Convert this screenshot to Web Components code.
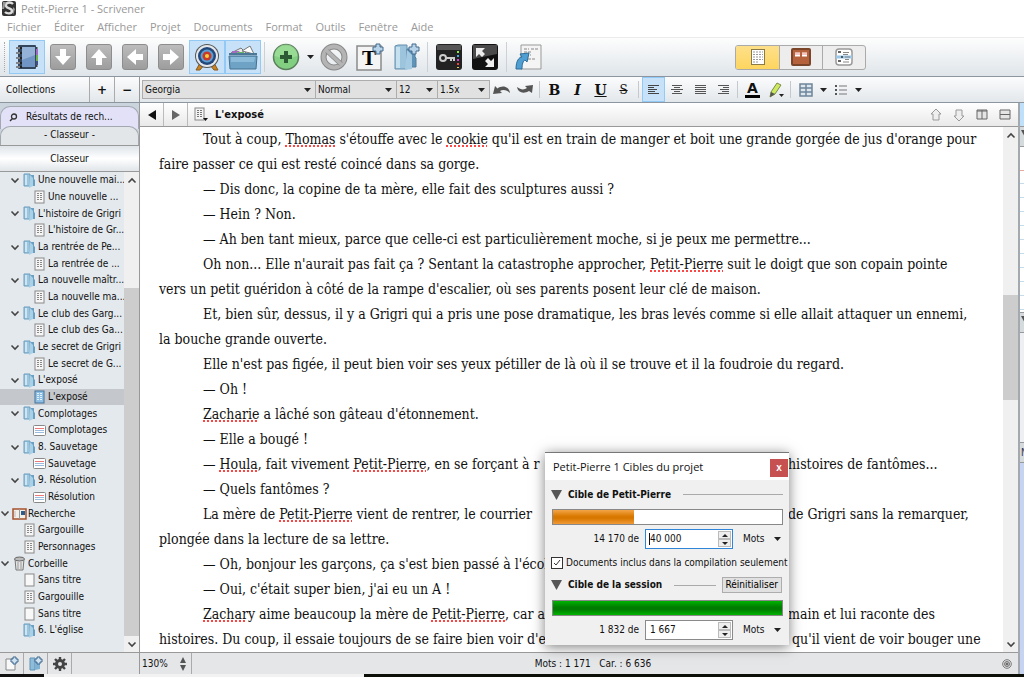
<!DOCTYPE html>
<html lang="fr">
<head>
<meta charset="utf-8">
<title>Petit-Pierre 1 - Scrivener</title>
<style>
  html, body { margin: 0; height: 100%; overflow: hidden; }
  body { font: 10px/16px "DejaVu Sans Condensed", "Liberation Sans", sans-serif; color: #111; background: #fff; }
</style>
</head>
<body>
<scrivener-app></scrivener-app>

<script>
// viewBox + markup for every icon
const ICONS = {
  app: ['0 0 16 16', '<rect x="1" width="14" height="15" rx="2" fill="#333"/><path d="M12 3C9 0 4 2 5 5s6 2 6 5-5 3-7 1" fill="none" stroke="#ddd" stroke-width="2.4"/><path d="M2 1h3L3 8H1zM12 6l2 2-2 6z" fill="#999"/>'],
  notebook: ['0 0 28 28', '<path d="M22 4h2.500v20H22z" fill="#444"/><path d="M22 6h3v6h-3z" fill="#a06bbd"/><path d="M22 12h3v6h-3z" fill="#6bb04a"/><path d="M22 18h3v4h-3z" fill="#444e80"/><rect x="5" y="2" width="18" height="24" rx="1" fill="#34465c"/><path d="M9 4h13v20H9z" fill="#7094c4"/><path d="M9 4h13v8L9 17z" fill="#94b1d8"/><path d="M3 5h6M3 10h6M3 15h6M3 20h6M3 24h6" stroke="#222" stroke-width="2.200"/><path d="M3 5h4M3 10h4M3 15h4M3 20h4M3 24h4" stroke="#dde5ee"/>'],
  target: ['0 0 28 28', '<path d="M7 20l-4 7h4l4-5zM21 20l4 7h-4l-4-5z" fill="#c98222" stroke="#8a5b1c"/><circle cx="14" cy="13" r="12" fill="#555"/><circle cx="14" cy="13" r="11" fill="#e6e9ec"/><circle cx="14" cy="13" r="9" fill="#24487a"/><circle cx="14" cy="13" r="6.500" fill="#5aa0d8"/><circle cx="14" cy="13" r="4.500" fill="#c63a2c"/><circle cx="14" cy="13" r="2" fill="#f2d13c"/>'],
  research: ['0 0 30 28', '<path d="M3 10l10-5 6 6z" fill="#e9e9e9" stroke="#777"/><path d="M14 8l8-5 4 8z" fill="#fff" stroke="#777"/><path d="M4 8h7l2 3H4z" fill="#a46bc0"/><path d="M9 9h7l1 3H9z" fill="#69b768"/><path d="M1 10h28v2H1z" fill="#4b7897"/><path d="M1 13h28l-1 13H2z" fill="#6fa3c6" stroke="#44708f"/><path d="M3 14h24l-1 5H3z" fill="#8cbbd9"/>'],
  plus: ['0 0 28 28', '<circle cx="14" cy="14" r="12.500" fill="#82cf82" stroke="#5a7f5c" stroke-width="1.500"/><path d="M2.500 13a11.500 11.500 0 0 1 23 0q-11 4-23 0" fill="#a6e2a0" opacity=".6"/><path d="M12 8h4v4h4v4h-4v4h-4v-4H8v-4h4z" fill="#2c5a34"/>'],
  forbid: ['0 0 28 28', '<circle cx="14" cy="14" r="10.500" fill="none" stroke="#888" stroke-width="6"/><circle cx="14" cy="14" r="10.500" fill="none" stroke="#b4b4b4" stroke-width="4"/><path d="M7 8l14 13" stroke="#888" stroke-width="5"/><path d="M6 7l16 15" stroke="#b4b4b4" stroke-width="3.500"/>'],
  newtext: ['0 0 28 28', '<path d="M1 3h24v24H1z" fill="#f4f4f4" stroke="#8b8b8b" stroke-width="1.500"/><text x="13" y="22" text-anchor="middle" font-family="Liberation Serif" font-weight="bold" font-size="21">T</text><path d="M20 1h4v3h3v4h-3v3h-4V8h-3V4h3z" fill="#b6d3ea" stroke="#456a8c"/>'],
  newfolder: ['0 0 28 28', '<path d="M3 3l3-1h9v24H3z" fill="#9cc4dd" stroke="#648fac"/><path d="M4 4h4v21H4z" fill="#c5e0ef"/><path d="M15 6h8v8l1 1v9h-9z" fill="#5f93b8" stroke="#527d9c"/><path d="M15 7l5 5v14l-7 1z" fill="#a5cbe2"/><path d="M20 1h4v3h3v4h-3v3h-4V8h-3V4h3z" fill="#b6d3ea" stroke="#456a8c"/>'],
  keywords: ['0 0 28 28', '<rect x="1" y="1" width="26" height="26" rx="3" fill="#222"/><path d="M2 2h24v5H2z" fill="#555"/><circle cx="8" cy="15" r="3" fill="none" stroke="#ccc" stroke-width="2"/><path d="M11 15h9M16 15v3M19 15v3" stroke="#ccc" stroke-width="2"/><path d="M22 8h2v2h-2z" fill="#8e4"/><path d="M22 12h2v2h-2z" fill="#4ad"/><path d="M22 16h2v2h-2z" fill="#c4c"/><path d="M22 20h2v2h-2z" fill="#e44"/><path d="M22 24h2v1h-2z" fill="#ec4"/>'],
  compose: ['0 0 28 28', '<rect x="1" y="1" width="26" height="26" rx="3" fill="#111"/><path d="M2 2h24v9L2 16z" fill="#4a4a4a"/><path d="M5 5h9l-3 3 3 3-3 3-3-3-3 3z" fill="#eee"/><path d="M23 24h-9l3-3-3-3 3-3 3 3 3-3z" fill="#eee"/>'],
  compile: ['0 0 28 28', '<path d="M7 2h20v24H7z" fill="#f4f4f4" stroke="#999"/><path d="M10 6h5M17 6h7M10 9h8M12 12h5M14 16h7" stroke="#888" stroke-dasharray="3 1"/><path d="M2 26c0-8 3-12 6-12l-2-3 9-1-2 9-2-2c-2 1-3 4-3 9z" fill="#4f9fd2" stroke="#2d6b98"/>'],
  down: ['0 0 24 24', '<path d="M9 4h6v7h5l-8 9-8-9h5z" fill="#fff"/>'],
  up: ['0 0 24 24', '<path d="M9 20h6v-7h5l-8-9-8 9h5z" fill="#fff"/>'],
  left: ['0 0 24 24', '<path d="M20 9v6h-7v5l-9-8 9-8v5z" fill="#fff"/>'],
  right: ['0 0 24 24', '<path d="M4 9v6h7v5l9-8-9-8v5z" fill="#fff"/>'],
  page: ['0 0 16 18', '<rect x="1.500" y="1.500" width="13" height="15" fill="#fff" stroke="#8a7a4a"/><path d="M3 4h10M3 6.500h10M3 9h10M3 11.500h10M3 14h6" stroke="#999" stroke-dasharray="2 1"/>'],
  cork: ['0 0 20 18', '<rect x="1" y="1" width="18" height="16" rx="1" fill="#b5613b" stroke="#7a4529" stroke-width="2"/><path d="M4 4.500h5v4H4zM11 4.500h5v4h-5z" fill="#fff"/><path d="M4 6h5M11 6h5" stroke="#e88"/>'],
  outline: ['0 0 18 18', '<rect x="1" y="1" width="16" height="16" rx="3" fill="#fff" stroke="#999" stroke-width="1.500"/><path d="M1 9h16" stroke="#9cc8e8" stroke-width="3"/><path d="M3 4h3M6 9h2M3 13h3" stroke="#333" stroke-width="1.500"/><path d="M8 4.500h6M8 6.500h5M10 9h5M10 11.500h4M8 14h6" stroke="#888"/>'],
  undo: ['0 0 18 12', '<path d="M0 10l2-8 2.500 2.500C9 1 16 2 17 9c-3-3-7-4-10-2l2 2z" fill="#555"/>'],
  redo: ['0 0 18 12', '<path d="M17 1l-1 8-3-2C8 10 2 9 1 3c4 3 7 3 10 1L9 2z" fill="#555"/>'],
  alignleft: ['0 0 12 11', '<path d="M0 1.500h11M0 3.500h6M0 5.500h9M0 7.500h7M0 9.500h11" stroke="#444"/>'],
  aligncenter: ['0 0 12 11', '<path d="M1 1.500h10M3 3.500h6M0 5.500h12M3 7.500h6M1 9.500h10" stroke="#555"/>'],
  alignjustify: ['0 0 12 11', '<path d="M1 1.500h11M1 3.500h11M1 5.500h11M1 7.500h11M1 9.500h11" stroke="#555"/>'],
  alignright: ['0 0 12 11', '<path d="M1 1.500h11M6 3.500h6M3 5.500h9M5 7.500h7M1 9.500h11" stroke="#555"/>'],
  pen: ['0 0 16 18', '<path d="M2 16l1-5L9 2l4 2-6 9z" fill="#cdea5f" stroke="#7b8a4a"/><path d="M2 16l1-5 4 2z" fill="#555"/><path d="M11 13h5l-2.500 3z" fill="#222"/>'],
  table: ['0 0 14 14', '<path d="M1 1h12v12H1zM1 5h12M1 9h12M7 1v12" fill="#dbe6ef" stroke="#6f8599" stroke-width="1.500"/>'],
  list: ['0 0 12 12', '<path d="M0 2h2M0 6h2M0 10h2" stroke="#555" stroke-width="2"/><path d="M4 2h8M4 6h8M4 10h8" stroke="#777"/>'],
  arrow: ['0 0 7 4', '<path d="M0 0h7L3.500 4z" fill="#222"/>'],
  navback: ['0 0 8 10', '<path d="M8 0v10L0 5z" fill="#111"/>'],
  navnext: ['0 0 8 10', '<path d="M0 0v10l8-5z" fill="#666"/>'],
  docmenu: ['0 0 14 15', '<rect x="1" y="1" width="9" height="12" fill="#f4f4f4" stroke="#888"/><path d="M3 3.500h5M3 5.500h5M3 7.500h5M3 9.500h5" stroke="#777" stroke-dasharray="2 1"/><path d="M9 11h5l-2.500 3z" fill="#111"/>'],
  prev: ['0 0 12 14', '<path d="M6 1l5 5H9v6H3V6H1z" fill="#eee" stroke="#999"/>'],
  next: ['0 0 12 14', '<path d="M6 13l5-5H9V2H3v6H1z" fill="#eee" stroke="#999"/>'],
  splitv: ['0 0 12 11', '<path d="M1 1h10v9H1zM6 1v9" fill="#e4e4e4" stroke="#666"/><path d="M1 2h10" stroke="#666"/>'],
  splith: ['0 0 12 11', '<path d="M1 1h10v9H1zM1 5.500h10" fill="#e4e4e4" stroke="#666"/>'],
  search: ['0 0 9 9', '<circle cx="5" cy="3.500" r="2.500" fill="none" stroke="#333" stroke-width="1.300"/><path d="M3.500 5.500L1 8" stroke="#333" stroke-width="1.500"/>'],
  chevron: ['0 0 10 7', '<path d="M1.500 1.500L5 5l3.500-3.500" fill="none" stroke="#444" stroke-width="1.600"/>'],
  chevronup: ['0 0 10 7', '<path d="M1.500 5.500L5 2l3.500 3.500" fill="none" stroke="#444" stroke-width="1.600"/>'],
  folder: ['0 0 13 15', '<path d="M1 1h6v12H1z" fill="#9cc6de" stroke="#6c9dbd"/><path d="M2 2h2v10H2z" fill="#cfe5f1"/><path d="M7 2h4v4l1 1v6H7z" fill="#6aa0c4"/><path d="M7 2l3 3v8l-4 2z" fill="#a9d0e6"/>'],
  doc: ['0 0 11 14', '<rect x="1" y="1" width="9" height="12" fill="#f6f6f6" stroke="#888"/><path d="M3 3.500h5M3 5.500h5M3 7.500h5M3 9.500h5" stroke="#888" stroke-dasharray="2 1"/>'],
  docblue: ['0 0 11 14', '<rect x="1" y="1" width="9" height="12" fill="#8fc0e4" stroke="#44729a"/><path d="M3 3.500h5M3 5.500h5M3 7.500h5M3 9.500h5" stroke="#e5f2fb" stroke-dasharray="2 1"/>'],
  blank: ['0 0 11 14', '<rect x="1" y="1" width="9" height="12" fill="#f8f8f8" stroke="#888"/>'],
  card: ['0 0 13 11', '<rect x=".5" y=".5" width="12" height="10" rx="1" fill="#fff" stroke="#888"/><path d="M2 3.500h9" stroke="#e77"/><path d="M2 5.500h9M2 7.500h9" stroke="#9bd"/>'],
  binder: ['0 0 15 12', '<rect x="1" y="1" width="13" height="10" fill="#f1efe8" stroke="#a5502c" stroke-width="1.500"/><path d="M7.500 1v10" stroke="#999"/><path d="M9 3h4v4H9z" fill="#2d5d8c"/><path d="M3 3v6" stroke="#bbb"/>'],
  trash: ['0 0 13 15', '<path d="M2 3h9l-1 11H3z" fill="#e4e4e4" stroke="#777"/><ellipse cx="6.500" cy="3" rx="5" ry="2" fill="#bbb" stroke="#666"/><path d="M5 6v7M8 6v7" stroke="#999"/>'],
  newdoc: ['0 0 14 15', '<path d="M1 3h9v11H1z" fill="#f8f8f8" stroke="#888"/><path d="M8 1h3v2h2v3h-2v2H8V6H6V3h2z" fill="#cfe2f1" stroke="#3d668c"/>'],
  addfolder: ['0 0 14 15', '<path d="M1 2h5v12H1z" fill="#8fbcd8" stroke="#5f93b5"/><path d="M6 3h5v10l-5 1z" fill="#7fb2d3"/><path d="M8 1h3v2h2v3h-2v2H8V6H6V3h2z" fill="#cfe2f1" stroke="#3d668c"/>'],
  gear: ['0 0 14 14', '<circle cx="7" cy="7" r="3.500" fill="none" stroke="#444" stroke-width="3"/><path d="M7 0v3M7 11v3M0 7h3M11 7h3M2 2l2 2M10 10l2 2M12 2l-2 2M4 10l-2 2" stroke="#444" stroke-width="2.400"/>'],
  stepper: ['0 0 8 16', '<path d="M1 7l3-6 3 6zM1 9h6l-3 6z" fill="#555"/>'],
  rings: ['0 0 10 10', '<circle cx="5" cy="5" r="4.300" fill="none" stroke="#777"/><circle cx="5" cy="5" r="2.500" fill="#bbb" stroke="#777"/><circle cx="5" cy="5" r="1" fill="#555"/>'],
  triangle: ['0 0 11 10', '<path d="M0 0h11L5.500 10z" fill="#555"/>']
};

class SvgIcon extends HTMLElement {
  connectedCallback() {
    const [box, shape] = ICONS[this.getAttribute('name')];
    const [, , w, h] = box.split(' ');
    this.attachShadow({ mode: 'open' });
    this.shadowRoot.innerHTML = `
      <style>
        :host { display: inline-flex; flex: none; }
        svg { display: block; }
      </style>
      <svg width="${w}" height="${h}" viewBox="${box}" aria-hidden="true">${shape}</svg>
    `;
  }
}
customElements.define('svg-icon', SvgIcon);

class ToolButton extends HTMLElement {
  connectedCallback() {
    this.attachShadow({ mode: 'open' });
    this.shadowRoot.innerHTML = `
      <style>
        :host { display: flex; flex: none; width: var(--tool-width, 23px); align-self: stretch; }
        button {
          flex: 1; display: flex; align-items: center; justify-content: center; box-sizing: border-box;
          margin: 0; padding: 0; border: 1px solid transparent; background: none; color: #111; font: inherit;
        }
        span { display: flex; }
        :host([active]) button { background: #c6e1f8; border-color: #92c9f5; }
        :host([tile]) span {
          border: 1px solid #8d8d8d; border-radius: 3px;
          background: linear-gradient(#bcbcbc, #9d9d9d);
        }
      </style>
      <button type="button" aria-label="${this.getAttribute('label') || ''}"><span><slot></slot></span></button>
    `;
  }
}
customElements.define('tool-button', ToolButton);

class ComboBox extends HTMLElement {
  connectedCallback() {
    this.attachShadow({ mode: 'open' });
    this.shadowRoot.innerHTML = `
      <style>
        :host { display: grid; align-items: center; box-sizing: border-box; height: 19px; border: 1px solid #adadad; background: #e1e1e1; }
        :host([plain]) { border: 0; background: none; }
        select, svg-icon { grid-area: 1 / 1; }
        select { appearance: none; min-width: 0; width: 100%; height: 17px; margin: 0; padding: 0 2px; border: 0; background: none; font: inherit; color: inherit; }
        svg-icon { justify-self: end; margin-right: 4px; pointer-events: none; }
        :host([plain]) svg-icon { margin-right: 2px; }
      </style>
      <select aria-label="${this.getAttribute('label')}"><option>${this.getAttribute('value')}</option></select>
      <svg-icon name="arrow"></svg-icon>
    `;
  }
}
customElements.define('combo-box', ComboBox);

class ScrollTrack extends HTMLElement {
  connectedCallback() {
    const [before, thumb, after] = this.getAttribute('ratio').split(' ');
    this.attachShadow({ mode: 'open' });
    this.shadowRoot.innerHTML = `
      <style>
        :host { display: flex; flex-direction: column; flex: none; width: 15px; background: #f0f0f0; }
        button { flex: none; height: 16px; display: flex; align-items: center; justify-content: center; margin: 0; padding: 0; border: 0; background: none; }
        .thumb { flex: ${thumb} 0 0; background: #cdcdcd; }
      </style>
      <button type="button" aria-label="Haut"><svg-icon name="chevronup"></svg-icon></button>
      <div style="flex: ${before} 0 0"></div>
      <div class="thumb"></div>
      <div style="flex: ${after} 0 0"></div>
      <button type="button" aria-label="Bas"><svg-icon name="chevron"></svg-icon></button>
    `;
  }
}
customElements.define('scroll-track', ScrollTrack);

class WindowHeader extends HTMLElement {
  connectedCallback() {
    const menus = ['Fichier', 'Éditer', 'Afficher', 'Projet', 'Documents', 'Format', 'Outils', 'Fenêtre', 'Aide'];
    this.attachShadow({ mode: 'open' });
    this.shadowRoot.innerHTML = `
      <style>
        :host { display: block; flex: none; font: 11px/16px "Open Sans", "Noto Sans", sans-serif; color: #999; }
        .title { display: flex; align-items: center; gap: 4px; height: 17px; padding-left: 1px; }
        nav { display: flex; gap: 13px; height: 20px; align-items: center; padding-left: 7px; }
        a { color: inherit; text-decoration: none; }
      </style>
      <div class="title"><svg-icon name="app"></svg-icon><span>Petit-Pierre 1 - Scrivener</span></div>
      <nav>${menus.map(m => `<a href="#">${m}</a>`).join('')}</nav>
    `;
  }
}
customElements.define('window-header', WindowHeader);

class MainToolbar extends HTMLElement {
  connectedCallback() {
    this.attachShadow({ mode: 'open' });
    this.shadowRoot.innerHTML = `
      <style>
        :host {
          --tool-width: 36px;
          display: flex; flex: none; align-items: center; box-sizing: border-box; height: 40px; padding: 2px 0 2px 4px;
          border-top: 1px solid #ececec; border-bottom: 1px solid #8d969f; background: linear-gradient(#fdfdfd, #dfe5ea);
        }
        .grip { width: 1px; height: 30px; margin-right: 3px; border-left: 1px dotted #aaa; }
        .sep { flex: none; width: 1px; height: 30px; margin: 0 3px; background: #ccd1d6; }
        .drop { --tool-width: 12px; }
        .views { display: flex; margin: 0 158px 0 auto; border: 1px solid #aaa; border-radius: 3px; overflow: hidden; background: #ededed; }
        .views button { width: 43px; height: 23px; box-sizing: border-box; display: flex; align-items: center; justify-content: center; margin: 0; padding: 0; border: 0; border-left: 1px solid #aaa; background: none; }
        .views button:first-child { border-left: 0; background: linear-gradient(#fde08a, #fdd55f); }
      </style>
      <div class="grip"></div>
      <tool-button active label="Classeur"><svg-icon name="notebook"></svg-icon></tool-button>
      <tool-button tile label="Descendre"><svg-icon name="down"></svg-icon></tool-button>
      <tool-button tile label="Monter"><svg-icon name="up"></svg-icon></tool-button>
      <tool-button tile label="Gauche"><svg-icon name="left"></svg-icon></tool-button>
      <tool-button tile label="Droite"><svg-icon name="right"></svg-icon></tool-button>
      <tool-button active label="Cibles"><svg-icon name="target"></svg-icon></tool-button>
      <tool-button active label="Dossier"><svg-icon name="research"></svg-icon></tool-button>
      <div class="sep"></div>
      <tool-button label="Ajouter"><svg-icon name="plus"></svg-icon></tool-button>
      <tool-button class="drop" label="Type"><svg-icon name="arrow"></svg-icon></tool-button>
      <tool-button label="Supprimer"><svg-icon name="forbid"></svg-icon></tool-button>
      <tool-button label="Nouveau texte"><svg-icon name="newtext"></svg-icon></tool-button>
      <tool-button label="Nouveau dossier"><svg-icon name="newfolder"></svg-icon></tool-button>
      <div class="sep"></div>
      <tool-button label="Mots-clés"><svg-icon name="keywords"></svg-icon></tool-button>
      <tool-button label="Plein écran"><svg-icon name="compose"></svg-icon></tool-button>
      <div class="sep"></div>
      <tool-button label="Compiler"><svg-icon name="compile"></svg-icon></tool-button>
      <div class="views">
        <button type="button" aria-label="Texte"><svg-icon name="page"></svg-icon></button>
        <button type="button" aria-label="Tableau"><svg-icon name="cork"></svg-icon></button>
        <button type="button" aria-label="Plan"><svg-icon name="outline"></svg-icon></button>
      </div>
    `;
  }
}
customElements.define('main-toolbar', MainToolbar);

class FormatBar extends HTMLElement {
  connectedCallback() {
    this.attachShadow({ mode: 'open' });
    this.shadowRoot.innerHTML = `
      <style>
        :host {
          display: flex; flex: none; align-items: center; box-sizing: border-box; height: 26px;
          border-bottom: 1px solid #8d969f; background: linear-gradient(#fcfcfd, #e2e7eb);
        }
        .collections { display: flex; align-items: center; align-self: stretch; box-sizing: border-box; width: 140px; border-right: 1px solid #999; margin-right: 2px; }
        .collections span { flex: 1; padding-left: 6px; }
        .collections tool-button { box-sizing: border-box; width: 25px; border-left: 1px solid #aaa; font: bold 12px "DejaVu Sans", sans-serif; }
        .font { width: 174px; } .style { width: 81px; } .size { width: 41px; } .spacing { width: 52px; }
        combo-box + combo-box { border-left: 0; }
        .sep { flex: none; width: 1px; height: 17px; margin: 0 3px; background: #c4c9ce; }
        .drop { --tool-width: 12px; }
        .glyph { font: bold 14px/20px "DejaVu Serif", serif; }
        .i { font-style: italic; } .u { text-decoration: underline; } .s { font-size: 12px; font-weight: normal; text-decoration: line-through; }
        .color { display: block; padding: 0 2px; border-bottom: 3px solid #000; font: bold 14px/13px "DejaVu Sans", sans-serif; }
      </style>
      <div class="collections">
        <span>Collections</span>
        <tool-button>+</tool-button>
        <tool-button>−</tool-button>
      </div>
      <combo-box class="font" label="Police" value="Georgia"></combo-box>
      <combo-box class="style" label="Style" value="Normal"></combo-box>
      <combo-box class="size" label="Taille" value="12"></combo-box>
      <combo-box class="spacing" label="Interligne" value="1.5x"></combo-box>
      <tool-button label="Annuler"><svg-icon name="undo"></svg-icon></tool-button>
      <tool-button label="Rétablir"><svg-icon name="redo"></svg-icon></tool-button>
      <div class="sep"></div>
      <tool-button class="glyph">B</tool-button>
      <tool-button class="glyph i">I</tool-button>
      <tool-button class="glyph"><span class="u">U</span></tool-button>
      <tool-button class="glyph"><span class="s">S</span></tool-button>
      <div class="sep"></div>
      <tool-button active label="Gauche"><svg-icon name="alignleft"></svg-icon></tool-button>
      <tool-button label="Centrer"><svg-icon name="aligncenter"></svg-icon></tool-button>
      <tool-button label="Justifier"><svg-icon name="alignjustify"></svg-icon></tool-button>
      <tool-button label="Droite"><svg-icon name="alignright"></svg-icon></tool-button>
      <div class="sep"></div>
      <tool-button><span class="color">A</span></tool-button>
      <tool-button label="Surligner"><svg-icon name="pen"></svg-icon></tool-button>
      <div class="sep"></div>
      <tool-button label="Tableau"><svg-icon name="table"></svg-icon></tool-button>
      <tool-button class="drop" label="Options du tableau"><svg-icon name="arrow"></svg-icon></tool-button>
      <tool-button label="Liste"><svg-icon name="list"></svg-icon></tool-button>
      <tool-button class="drop" label="Options de liste"><svg-icon name="arrow"></svg-icon></tool-button>
    `;
  }
}
customElements.define('format-bar', FormatBar);

// depth, icon, text, open
const TREE = [
  [1, 'folder', 'Une nouvelle mai...', true], [2, 'doc', 'Une nouvelle ...'],
  [1, 'folder', "L'histoire de Grigri", true], [2, 'doc', "L'histoire de Gr..."],
  [1, 'folder', 'La rentrée de Pe...', true], [2, 'doc', 'La rentrée de ...'],
  [1, 'folder', 'La nouvelle maîtr...', true], [2, 'doc', 'La nouvelle ma...'],
  [1, 'folder', 'Le club des Garg...', true], [2, 'doc', 'Le club des Ga...'],
  [1, 'folder', 'Le secret de Grigri', true], [2, 'doc', 'Le secret de G...'],
  [1, 'folder', "L'exposé", true], [2, 'docblue', "L'exposé"],
  [1, 'folder', 'Complotages', true], [2, 'card', 'Complotages'],
  [1, 'folder', '8. Sauvetage', true], [2, 'card', 'Sauvetage'],
  [1, 'folder', '9. Résolution', true], [2, 'card', 'Résolution'],
  [0, 'binder', 'Recherche', true], [1, 'doc', 'Gargouille'], [1, 'doc', 'Personnages'],
  [0, 'trash', 'Corbeille', true], [1, 'blank', 'Sans titre'], [1, 'doc', 'Gargouille'],
  [1, 'blank', 'Sans titre'], [1, 'folder', "6. L'église"]
];

class BinderPanel extends HTMLElement {
  connectedCallback() {
    this.attachShadow({ mode: 'open' });
    this.shadowRoot.innerHTML = `
      <style>
        :host { display: flex; flex-direction: column; flex: none; box-sizing: border-box; width: 140px; border-right: 1px solid #999; background: #c9d4dc; }
        .tab { box-sizing: border-box; border: 1px solid #a3a8b0; border-bottom: 0; border-radius: 10px 10px 0 0; text-align: center; }
        .results { display: flex; align-items: center; gap: 8px; height: 23px; margin-top: 3px; padding: 0 8px 2px; background: #e2e1f7; }
        .binder { height: 19px; margin-top: -3px; background: #e3e6e9; }
        h2 { margin: 0; height: 25px; line-height: 25px; font-size: inherit; font-weight: normal; text-align: center; border: solid #999; border-width: 1px 0; background: linear-gradient(#dfe5ea, #fff 50%, #e0e5e9); }
        .body { flex: 1; display: flex; min-height: 0; background: #e4e9ed; }
        ul { flex: 1; min-width: 0; display: flex; flex-direction: column; margin: 0; padding: 0 0 13px; list-style: none; }
        li { flex: 1 0 0; display: flex; align-items: center; min-height: 0; white-space: nowrap; line-height: 16px; }
        li.selected { background: #c4c7cb; }
        .twist { flex: none; width: 10px; height: 7px; margin: 0 2px 0 0; padding: 0; border: 0; background: none; display: flex; }
        .icon { flex: none; width: 15px; margin-right: 1px; display: flex; justify-content: center; }
      </style>
      <div class="tab results"><svg-icon name="search"></svg-icon>Résultats de rech...</div>
      <div class="tab binder">- Classeur -</div>
      <h2>Classeur</h2>
      <div class="body">
        <ul>${TREE.map(([depth, icon, text, open]) => `
          <li class="${icon === 'docblue' ? 'selected' : ''}" style="padding-left: ${depth * 10}px">
            ${open ? '<button type="button" class="twist" aria-label="Replier"><svg-icon name="chevron"></svg-icon></button>' : '<span class="twist"></span>'}
            <span class="icon"><svg-icon name="${icon}"></svg-icon></span><span>${text}</span>
          </li>`).join('')}
        </ul>
        <scroll-track ratio="100 349 0"></scroll-track>
      </div>
    `;
  }
}
customElements.define('binder-panel', BinderPanel);

class TextEditor extends HTMLElement {
  connectedCallback() {
    this.attachShadow({ mode: 'open' });
    this.shadowRoot.innerHTML = `
      <style>
        :host { display: flex; flex-direction: column; flex: 1; min-width: 0; background: #fff; }
        header { display: flex; flex: none; align-items: center; box-sizing: border-box; height: 24px; padding-right: 2px; border-bottom: 1px solid #999; background: linear-gradient(#fff, #e9e9ea); }
        header tool-button.nav { border-right: 1px solid #bbb; }
        h1 { flex: 1; margin: 0 0 0 7px; font-size: 11px; line-height: 16px; }
        .menu { margin-left: 6px; }
        .body { flex: 1; display: flex; min-height: 0; }
        .page { flex: 1; min-width: 0; overflow: hidden; padding-left: 19px; outline: 0; font: 14px/25px "DejaVu Serif Condensed", "DejaVu Serif", serif; color: #111; white-space: nowrap; }
        p { margin: 0; text-indent: 44px; }
        u { text-decoration: underline dotted #f44 2px; text-underline-offset: 1px; }
        .lead { display: inline-block; width: 585px; text-indent: 0; }
        .lead.full { width: 629px; }
      </style>
      <header>
        <tool-button class="nav" label="Précédent"><svg-icon name="navback"></svg-icon></tool-button>
        <tool-button class="nav" label="Suivant"><svg-icon name="navnext"></svg-icon></tool-button>
        <svg-icon class="menu" name="docmenu"></svg-icon>
        <h1>L'exposé</h1>
        <tool-button label="Document précédent"><svg-icon name="prev"></svg-icon></tool-button>
        <tool-button label="Document suivant"><svg-icon name="next"></svg-icon></tool-button>
        <tool-button label="Diviser verticalement"><svg-icon name="splitv"></svg-icon></tool-button>
        <tool-button label="Diviser horizontalement"><svg-icon name="splith"></svg-icon></tool-button>
      </header>
      <div class="body">
        <div class="page" contenteditable="true" role="textbox" aria-multiline="true" spellcheck="false">
          <p>Tout à coup, <u>Thomas</u> s'étouffe avec le <u>cookie</u> qu'il est en train de manger et boit une grande gorgée de jus d'orange pour<br>faire passer ce qui est resté coincé dans sa gorge.</p>
          <p>— Dis donc, la copine de ta mère, elle fait des sculptures aussi ?</p>
          <p>— Hein ? Non.</p>
          <p>— Ah ben tant mieux, parce que celle-ci est particulièrement moche, si je peux me permettre...</p>
          <p>Oh non... Elle n'aurait pas fait ça ? Sentant la catastrophe approcher, <u>Petit-Pierre</u> suit le doigt que son copain pointe<br>vers un petit guéridon à côté de la rampe d'escalier, où ses parents posent leur clé de maison.</p>
          <p>Et, bien sûr, dessus, il y a Grigri qui a pris une pose dramatique, les bras levés comme si elle allait attaquer un ennemi,<br>la bouche grande ouverte.</p>
          <p>Elle n'est pas figée, il peut bien voir ses yeux pétiller de là où il se trouve et il la foudroie du regard.</p>
          <p>— Oh !</p>
          <p><u>Zacharie</u> a lâché son gâteau d'étonnement.</p>
          <p>— Elle a bougé !</p>
          <p><span class="lead">— <u>Houla</u>, fait vivement <u>Petit-Pierre</u>, en se forçant à r</span>histoires de fantômes...</p>
          <p>— Quels fantômes ?</p>
          <p><span class="lead">La mère de <u>Petit-Pierre</u> vient de rentrer, le courrier</span>de Grigri sans la remarquer,<br>plongée dans la lecture de sa lettre.</p>
          <p>— Oh, bonjour les garçons, ça s'est bien passé à l'école</p>
          <p>— Oui, c'était super bien, j'ai eu un A !</p>
          <p><span class="lead"><u>Zachary</u> aime beaucoup la mère de <u>Petit-Pierre</u>, car a</span>main et lui raconte des<br><span class="lead full">histoires. Du coup, il essaie toujours de se faire bien voir d'e</span>&nbsp;qu'il vient de voir bouger une</p>
        </div>
        <scroll-track ratio="151 104 235"></scroll-track>
      </div>
    `;
  }
}
customElements.define('text-editor', TextEditor);

class InspectorEdge extends HTMLElement {
  connectedCallback() {
    this.attachShadow({ mode: 'open' });
    this.shadowRoot.innerHTML = `
      <style>
        :host { display: flex; flex-direction: column; flex: none; box-sizing: border-box; width: 6px; border-left: 2px solid #a4a9b0; overflow: hidden; }
        .head { flex: none; height: 23px; background: #bfe0fa; }
        .bar { flex: none; box-sizing: border-box; height: 21px; padding: 2px 1px; overflow: hidden; border: solid #999; border-width: 1px 0; background: #d5dadd; color: #335; }
        .card { flex: 150 0 0; border-top: 23px solid #fff; background: repeating-linear-gradient(#fff 0 13px, #c3dcee 13px 14px); box-shadow: inset 0 1px #e9a9a0; }
        .meta { flex: 115 0 0; background: #eeeff2; }
        .notes { flex: 222 0 0; background: #c6d4f1; }
      </style>
      <div class="head"></div>
      <div class="bar"><svg-icon name="triangle"></svg-icon></div>
      <div class="card"></div>
      <div class="bar"><svg-icon name="triangle"></svg-icon></div>
      <div class="meta"></div>
      <div class="bar">N</div>
      <div class="notes"></div>
    `;
  }
}
customElements.define('inspector-edge', InspectorEdge);

class StatusBar extends HTMLElement {
  connectedCallback() {
    this.attachShadow({ mode: 'open' });
    this.shadowRoot.innerHTML = `
      <style>
        :host { display: flex; flex: none; align-items: stretch; box-sizing: border-box; height: 22px; border-top: 1px solid #999; background: #e4e6e8; }
        .left { display: flex; box-sizing: border-box; width: 140px; border-right: 1px solid #999; }
        .left tool-button { border-right: 1px solid #aaa; }
        .zoom { display: flex; align-items: center; justify-content: space-between; box-sizing: border-box; width: 52px; padding: 0 4px 0 2px; border-right: 1px solid #aaa; }
        .counts { flex: 1; align-self: center; text-align: center; white-space: pre; padding-right: 8px; }
        .end { align-self: center; margin-right: 6px; }
      </style>
      <div class="left">
        <tool-button label="Nouveau texte"><svg-icon name="newdoc"></svg-icon></tool-button>
        <tool-button label="Nouveau dossier"><svg-icon name="addfolder"></svg-icon></tool-button>
        <tool-button label="Réglages"><svg-icon name="gear"></svg-icon></tool-button>
      </div>
      <div class="zoom">130%<svg-icon name="stepper"></svg-icon></div>
      <div class="counts">Mots : 1 171   Car. : 6 636</div>
      <svg-icon class="end" name="rings"></svg-icon>
    `;
  }
}
customElements.define('status-bar', StatusBar);

class SpinField extends HTMLElement {
  connectedCallback() {
    this.attachShadow({ mode: 'open' });
    this.shadowRoot.innerHTML = `
      <style>
        :host { display: flex; box-sizing: border-box; width: 88px; height: 20px; padding: 1px; border: 1px solid #8a8a8a; background: #fff; }
        :host([focused]) { border-color: #2f86d8; }
        input { flex: 1; min-width: 0; margin: 0; padding: 0 3px; border: 0; outline: 0; background: none; font: inherit; color: inherit; }
        :host([focused]) input { border-left: 1px solid #111; margin: 2px 0 2px 2px; padding: 0; }
        .steps { display: flex; flex-direction: column; width: 13px; }
        button { flex: 1; display: flex; align-items: center; justify-content: center; margin: 0; padding: 0; border: 1px solid #bbb; background: #eee; }
        i { border: 3px solid transparent; border-top: 0; border-bottom: 3px solid #222; }
        button + button i { border-bottom: 0; border-top: 3px solid #222; }
      </style>
      <input type="text" aria-label="${this.getAttribute('label')}" value="${this.getAttribute('value')}">
      <div class="steps">
        <button type="button" aria-label="Plus"><i></i></button>
        <button type="button" aria-label="Moins"><i></i></button>
      </div>
    `;
  }
}
customElements.define('spin-field', SpinField);

class TargetsDialog extends HTMLElement {
  connectedCallback() {
    this.attachShadow({ mode: 'open' });
    this.shadowRoot.innerHTML = `
      <style>
        :host {
          position: absolute; left: 545px; top: 452px; width: 244px; box-sizing: border-box; padding-bottom: 5px;
          border-top: 1px solid #777; background: #f0f0f0; box-shadow: 0 2px 12px rgba(0, 0, 0, .5);
        }
        .title { display: flex; align-items: center; justify-content: space-between; height: 27px; padding: 0 1px 0 8px; background: #fff; font: 11px/16px "Open Sans", "Noto Sans", sans-serif; }
        .close { width: 18px; height: 18px; margin: 3px 0 0; padding: 0; border: 0; background: #c75050; color: #fff; font: bold 10px/16px "Liberation Sans", sans-serif; }
        section { padding: 0 6px; }
        .heading { display: flex; align-items: center; gap: 6px; height: 29px; }
        .heading.session { height: 16px; margin-bottom: 7px; }
        h2 { margin: 0; font-size: 10px; line-height: 16px; }
        .rule { flex: 1; height: 1px; margin-left: 6px; background: #aaa; }
        .reset { height: 16px; margin: 0 1px 0 0; padding: 0 3px; border: 1px solid #adadad; background: #e1e1e1; font: inherit; line-height: 12px; }
        .track { display: flex; box-sizing: border-box; height: 16px; margin: 0 0 4px 1px; border: 1px solid #888; background: #fff; }
        .fill { width: 35.400%; background: linear-gradient(#f5a548, #d87800 45%, #d87800 60%, #f09a38); }
        .done { width: 100%; background: linear-gradient(#00b400, #007c00 45%, #007c00 60%, #00b400); }
        .row { display: flex; align-items: center; height: 20px; }
        .row span { width: 88px; margin-right: 6px; text-align: right; }
        combo-box { width: 42px; margin-left: 8px; }
        label { display: flex; align-items: center; gap: 3px; height: 28px; white-space: nowrap; }
        input { appearance: none; flex: none; width: 12px; height: 12px; margin: 0; border: 1px solid #333; background: #fff; }
        .box { display: grid; }
        .box > * { grid-area: 1 / 1; }
        .box svg { pointer-events: none; }
        input:not(:checked) + svg { display: none; }
      </style>
      <div class="title">Petit-Pierre 1 Cibles du projet<button type="button" class="close">x</button></div>
      <section>
        <div class="heading"><svg-icon name="triangle"></svg-icon><h2>Cible de Petit-Pierre</h2><div class="rule"></div></div>
        <div class="track"><div class="fill"></div></div>
        <div class="row"><span>14 170 de</span><spin-field focused label="Cible du projet" value="40 000"></spin-field><combo-box plain label="Unité" value="Mots"></combo-box></div>
        <label>
          <span class="box"><input type="checkbox" checked><svg width="12" height="12" viewBox="0 0 12 12"><path d="M3 6l2 2 4-5" fill="none" stroke="#333"/></svg></span>
          Documents inclus dans la compilation seulement
        </label>
      </section>
      <section>
        <div class="heading session"><svg-icon name="triangle"></svg-icon><h2>Cible de la session</h2><div class="rule"></div><button type="button" class="reset">Réinitialiser</button></div>
        <div class="track"><div class="done"></div></div>
        <div class="row"><span>1 832 de</span><spin-field label="Cible de la session" value="1 667"></spin-field><combo-box plain label="Unité" value="Mots"></combo-box></div>
      </section>
    `;
  }
}
customElements.define('targets-dialog', TargetsDialog);

class ScrivenerApp extends HTMLElement {
  connectedCallback() {
    this.attachShadow({ mode: 'open' });
    this.shadowRoot.innerHTML = `
      <style>
        :host { display: flex; flex-direction: column; height: 100vh; }
        .work { flex: 1; display: flex; min-height: 0; }
        .main { flex: 1; display: flex; flex-direction: column; min-width: 0; }
        .panes { flex: 1; display: flex; min-height: 0; }
        .desktop { flex: none; height: 3px; background: linear-gradient(90deg, #111 44px, #f2f2f2 44px 364px, #0c0f08 364px); }
      </style>
      <window-header></window-header>
      <main-toolbar></main-toolbar>
      <format-bar></format-bar>
      <div class="work">
        <div class="main">
          <div class="panes"><binder-panel></binder-panel><text-editor></text-editor></div>
          <status-bar></status-bar>
        </div>
        <inspector-edge></inspector-edge>
      </div>
      <div class="desktop"></div>
      <targets-dialog></targets-dialog>
    `;
  }
}
customElements.define('scrivener-app', ScrivenerApp);
</script>
</body>
</html>
